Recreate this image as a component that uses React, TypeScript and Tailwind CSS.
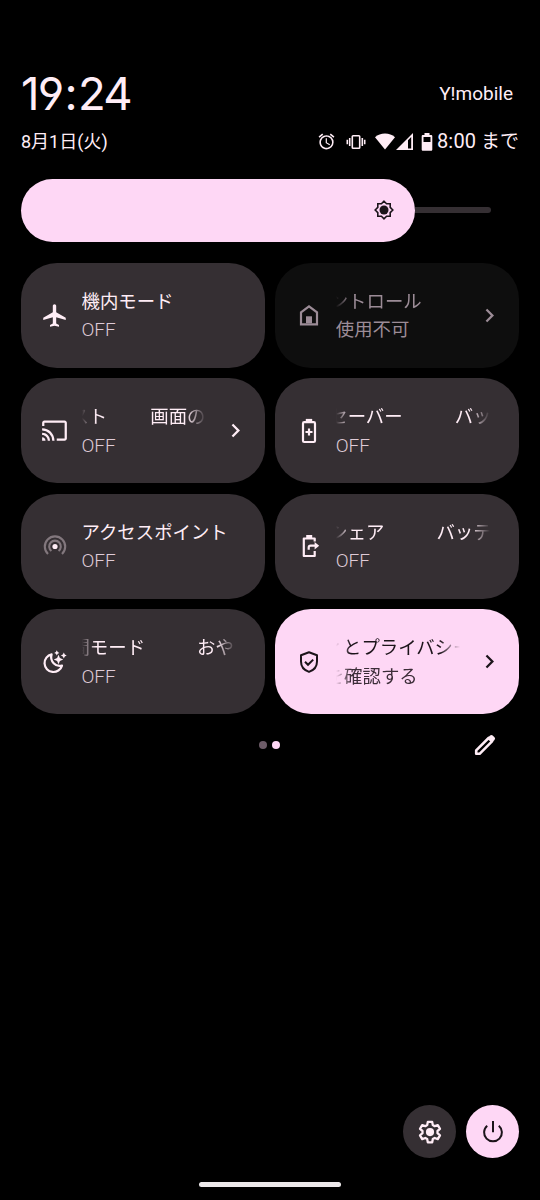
import type { ReactNode } from 'react'
import { MdAirplanemodeActive, MdAlarm, MdCast, MdChevronRight } from 'react-icons/md'
import clsx from 'clsx'

type Variant = 'off' | 'active' | 'disabled'

interface TileProps {
  icon: ReactNode
  title: string
  status: string
  variant?: Variant
  chevron?: boolean
  // how far the marquee has scrolled, in px
  scroll?: number
  statusScroll?: number
}

const tileStyles: Record<Variant, string> = {
  off: 'bg-[#352f33] text-[#ffedf6]',
  active: 'bg-[#fed7f5] text-[#1c141a]',
  disabled: 'bg-[#0e0e0e] text-[#9c8c97]',
}

const statusStyles: Record<Variant, string> = {
  off: 'text-[19px] font-light text-[#dfcbd7]',
  active: 'text-[#3c2d38]',
  disabled: 'text-[#9c8c97]',
}

function HomeIcon() {
  return (
    <svg width="26" height="26" viewBox="0 0 26 26" fill="none" stroke="currentColor" strokeWidth="2.2">
      <path d="M5 10.3 13 4.3l8 6V22.3H5Z" />
      <path d="M10 14.3h6v7h-6z" fill="currentColor" stroke="none" />
    </svg>
  )
}

function BatterySaverIcon() {
  return (
    <svg width="26" height="26" viewBox="0 0 26 26" fill="none" stroke="currentColor" strokeWidth="2.2">
      <rect x="7" y="4.2" width="12" height="19.8" rx="1.2" />
      <path d="M9.8 2.4h6.4" strokeWidth="3" />
      <path d="M13 10.5v7M9.5 14h7" />
    </svg>
  )
}

function BatteryShareIcon() {
  return (
    <svg width="26" height="26" viewBox="0 0 26 26" fill="none" stroke="currentColor" strokeWidth="2.2">
      <path d="M18.7 8.5V5.500H7.800v17.500h10.900v-5" strokeLinejoin="round" />
      <path d="M10.200 3.500h6" strokeWidth="3" />
      <path d="M12.700 16.800v-2.200q0-1.900 1.900-1.900h5" />
      <path d="m18.600 8.900 4.600 3.800-4.600 3.800z" fill="currentColor" stroke="none" />
    </svg>
  )
}

function HotspotIcon() {
  return (
    <svg width="26" height="26" viewBox="0 0 26 26" fill="none" stroke="currentColor" strokeWidth="2.1">
      <circle cx="13" cy="13.5" r="2.6" fill="currentColor" stroke="none" />
      <g opacity="0.38">
        <path d="M9.4 18a5.8 5.8 0 1 1 7.2 0" />
        <path d="M6 21a10.2 10.2 0 1 1 14 0" />
      </g>
    </svg>
  )
}

function BedtimeIcon() {
  return (
    <svg width="26" height="26" viewBox="0 0 26 26" fill="none">
      <path
        d="M10.600 5.400A8.900 8.900 0 1 0 21 16.600C14.500 18.400 8.600 12.200 10.600 5.400Z"
        stroke="currentColor"
        strokeWidth="2.2"
        strokeLinejoin="round"
        transform="translate(-1 0)"
      />
      <g fill="currentColor" transform="translate(-.5 0)">
        <path d="m17 5.800 1.400 3.300 3.300 1.400-3.300 1.400-1.400 3.300-1.400-3.300-3.300-1.400 3.300-1.400z" />
        <path d="m15.300 1.300.9 1.700 1.700.9-1.700.9-.9 1.700-.9-1.700-1.700-.9 1.700-.9z" />
        <path d="m22.300 3.600 1 1.900 1.900 1-1.900 1-1 1.900-1-1.900-1.900-1 1.900-1z" />
      </g>
    </svg>
  )
}

function ShieldIcon() {
  return (
    <svg width="26" height="26" viewBox="0 0 26 26" fill="none" stroke="currentColor" strokeWidth="2">
      <path d="m13 3.300 8 2.900v6.300c0 5-3.400 8.800-8 10.400-4.600-1.600-8-5.400-8-10.400V6.200z" strokeLinejoin="round" />
      <path d="m9 12.800 3 3 5.200-5.200" />
    </svg>
  )
}

function BrightnessIcon() {
  return (
    <svg width="22" height="22" viewBox="0 0 22 22" fill="none" stroke="#1c141a" strokeWidth="1.6">
      <path d="M11 2.200 13.600 4.800h3.600v3.600L19.800 11l-2.600 2.600v3.600h-3.600L11 19.800l-2.600-2.600H4.800v-3.600L2.200 11l2.600-2.600V4.800h3.600z" />
      <circle cx="11" cy="11" r="4.500" fill="#1c141a" stroke="none" />
    </svg>
  )
}

function VibrateIcon() {
  return (
    <svg width="20" height="16" viewBox="0 0 20 16" fill="none" stroke="currentColor" strokeWidth="1.6">
      <rect x="6.300" y="1.800" width="7.400" height="12.400" rx="0.800" />
      <path d="M3.700 4v8M1.300 5.800v4.400M16.300 4v8M18.700 5.800v4.400" />
    </svg>
  )
}

function WifiIcon() {
  return (
    <svg width="20" height="17" viewBox="0 0 20 17" fill="currentColor">
      <path d="M0 4.200Q4.200.6 10 .6t10 3.600L10 16.600z" />
    </svg>
  )
}

function SignalIcon() {
  return (
    <svg width="17" height="17" viewBox="0 0 17 17" fill="currentColor">
      <path fillRule="evenodd" d="M17 0v17H0zM12 7.200v8.200h3.200V4z" />
    </svg>
  )
}

function BatteryIcon() {
  return (
    <svg width="12" height="18" viewBox="0 0 12 18" fill="currentColor">
      <path
        fillRule="evenodd"
        d="M3.500 0h5v2H10c.8 0 1.300.5 1.300 1.300v13.200c0 .8-.5 1.300-1.300 1.300H2c-.8 0-1.300-.5-1.300-1.300V3.300C.7 2.500 1.200 2 2 2h1.500zM2.500 4v5h7V4z"
      />
    </svg>
  )
}

function PencilIcon() {
  return (
    <svg width="22" height="22" viewBox="0 0 22 22" fill="none" stroke="currentColor">
      <path d="M2.200 19.800v-3.400L14.600 4l3.400 3.400L5.600 19.800z" strokeWidth="2.600" strokeLinejoin="round" />
      <path d="m13.800 3.800 2.300-2.300q1.300-1.200 2.600 0L20.500 3.300q1.200 1.300 0 2.600L18.200 8.200z" fill="currentColor" stroke="none" />
    </svg>
  )
}

function GearIcon() {
  return (
    <svg width="28" height="28" viewBox="0 0 28 28">
      <path
        d="M11.800 3.900h4.400l.6 3.200 1.900 1.100 3.100-1.100 2.200 3.800-2.500 2.100v2.200l2.500 2.100-2.200 3.800-3.100-1.100-1.900 1.100-.6 3.200h-4.400l-.6-3.200-1.900-1.100-3.100 1.100L4 17.300l2.500-2.100V13L4 10.900l2.200-3.800 3.100 1.100 1.900-1.100z"
        fill="none"
        stroke="currentColor"
        strokeWidth="2.300"
        strokeLinejoin="round"
      />
      <circle cx="14" cy="14.100" r="4.100" fill="currentColor" />
    </svg>
  )
}

function PowerIcon() {
  return (
    <svg width="24" height="24" viewBox="0 0 24 24" fill="none" stroke="currentColor" strokeWidth="2">
      <path d="M12 1v11.300M6.200 5.700a8.900 8.900 0 1 0 11.600 0" />
    </svg>
  )
}

interface LineProps {
  text: string
  scroll?: number
  repeatClass?: string
  className?: string
}

function Line({ text, scroll, repeatClass, className }: LineProps) {
  const scrolling = scroll !== undefined
  return (
    <div
      className={clsx(
        'h-[28.5px] overflow-hidden whitespace-nowrap leading-[28.5px]',
        scrolling && '[mask-image:linear-gradient(to_right,transparent,black_14px,black_calc(100%-20px),transparent)]',
        className
      )}
    >
      <div className="flex" style={{ marginLeft: scrolling ? -scroll : 0 }}>
        <span className="shrink-0">{text}</span>
        {repeatClass && <span className={clsx('shrink-0', repeatClass)}>{text}</span>}
      </div>
    </div>
  )
}

function Tile({ icon, title, status, variant = 'off', chevron, scroll, statusScroll }: TileProps) {
  const gap = chevron ? 'ml-[43px]' : 'ml-[52px]'
  return (
    <button
      className={clsx(
        'flex h-[105px] items-center rounded-[36px] pl-5 text-left text-[18.4px]',
        chevron ? 'pr-4' : 'pr-[29px]',
        tileStyles[variant]
      )}
    >
      <span className="flex w-[27px] shrink-0 justify-center">{icon}</span>
      <span className="ml-[13.5px] min-w-0 flex-1 pt-[2.5px]">
        <Line text={title} scroll={scroll} repeatClass={scroll !== undefined ? gap : undefined} />
        <Line text={status} scroll={statusScroll} className={statusStyles[variant]} />
      </span>
      {chevron && <MdChevronRight className="ml-4 size-[27px] shrink-0" />}
    </button>
  )
}

export default function App() {
  return (
    <div className="flex h-[1200px] w-[540px] flex-col bg-black px-[21px] font-['Roboto','Noto_Sans_CJK_JP',sans-serif] text-[#ffedf6]">
      <header className="pt-[66px]">
        <div className="flex h-14 items-center justify-between">
          <span className="font-['Inter',sans-serif] text-[45.5px] leading-none tracking-[-1.7px] [font-feature-settings:'cv04','ss03']">
            19<span className="mx-[2px]">:</span>24
          </span>
          <span className="pr-1.5 pt-px text-[19px]">Y!mobile</span>
        </div>
        <div className="mt-[5.5px] flex h-7 items-center justify-between text-[18px]">
          <span>8月1日(火)</span>
          <div className="flex items-center">
            <MdAlarm className="size-[19px]" />
            <span className="ml-[10px]"><VibrateIcon /></span>
            <span className="ml-[9px]"><WifiIcon /></span>
            <span className="ml-px"><SignalIcon /></span>
            <span className="ml-2"><BatteryIcon /></span>
            <span className="ml-1 text-[19px]">
              <span className="text-[20px] tracking-[0.2px]">8:00</span> まで
            </span>
          </div>
        </div>
      </header>

      <div className="mt-[23px] flex h-[63px] items-center">
        <div className="flex h-full w-[394px] items-center justify-end rounded-full bg-[#fed7f5] pr-5">
          <BrightnessIcon />
        </div>
        <div className="h-1.5 w-[76px] rounded-r-full bg-[#352f33]" />
      </div>

      <div className="mt-[21px] grid grid-cols-2 gap-[10.5px]">
        <Tile icon={<MdAirplanemodeActive className="size-[27px]" />} title="機内モード" status="OFF" />
        <Tile icon={<HomeIcon />} title="デバイス コントロール" status="使用不可" variant="disabled" chevron scroll={102} />
        <Tile icon={<MdCast className="size-[27px]" />} title="画面のキャスト" status="OFF" chevron scroll={103} />
        <Tile icon={<BatterySaverIcon />} title="バッテリー セーバー" status="OFF" scroll={103} />
        <Tile icon={<HotspotIcon />} title="アクセスポイント" status="OFF" />
        <Tile icon={<BatteryShareIcon />} title="バッテリー シェア" status="OFF" scroll={103} />
        <Tile icon={<BedtimeIcon />} title="おやすみ時間モード" status="OFF" scroll={102} />
        <Tile
          icon={<ShieldIcon />}
          title="セキュリティとプライバシー"
          status="ステータスを確認する"
          variant="active"
          chevron
          scroll={102}
          statusScroll={102}
        />
      </div>

      <div className="mt-5 grid grid-cols-3 items-center">
        <div />
        <div className="flex justify-center gap-[4.5px] pr-px">
          <span className="size-2 rounded-full bg-[#6d5c68]" />
          <span className="size-2 rounded-full bg-[#fed7f5]" />
        </div>
        <button className="justify-self-end pr-[23px]">
          <PencilIcon />
        </button>
      </div>

      <div className="mt-auto flex justify-end gap-2.5">
        <button className="flex size-[53px] items-center justify-center rounded-full bg-[#352f33]">
          <GearIcon />
        </button>
        <button className="flex size-[53px] items-center justify-center rounded-full bg-[#fed7f5] text-[#1c141a]">
          <PowerIcon />
        </button>
      </div>
      <div className="mx-auto mt-[23.5px] mb-[13px] h-[5.5px] w-[142px] rounded-full bg-[#ece8ea]" />
    </div>
  )
}
